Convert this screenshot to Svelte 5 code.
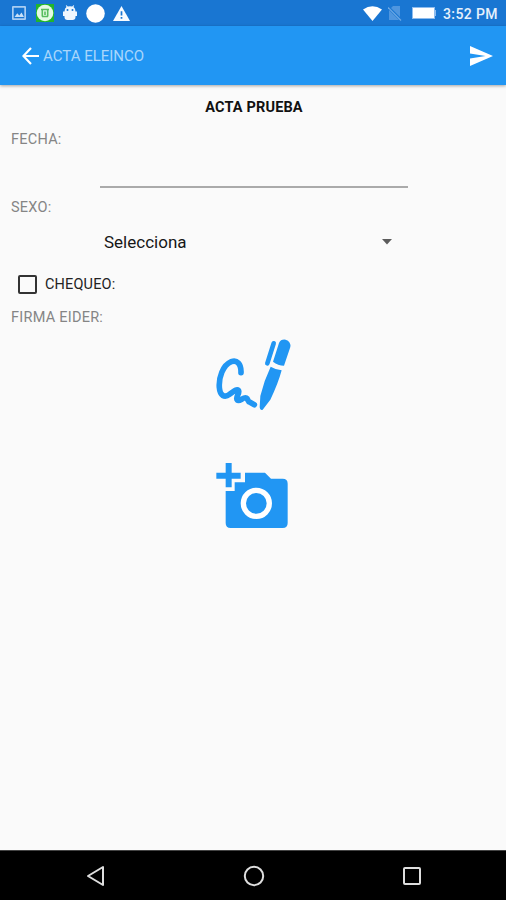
<script>
  let checked = $state(false);
</script>

<div class="screen">
  <div class="status">
    <div class="notifications">
      <svg width="14" height="14" viewBox="0 0 14 14"><path fill="#a9cdf2" fill-rule="evenodd" d="M1 0h12q1 0 1 1v12q0 1-1 1H1q-1 0-1-1V1q0-1 1-1zM1.700 1.700v10.600h10.600V1.700z"/><path fill="#c8e0f7" d="M2.500 11l2.800-3.700 2 2.300 2.200-3 2.500 4.400z"/></svg>
      <svg width="18" height="18" viewBox="0 0 18 18"><path fill="#22b52c" d="M0 0h18v18H0z"/><circle cx="9" cy="9" r="8.300" fill="#e4fae3"/><path d="M5 5.500h8M6.300 5.500v7M11.700 5.500v7M6 12.500h6M9 7.500v3.500" fill="none" stroke="#58bd5e" stroke-width="1.600"/></svg>
      <svg width="14" height="16" viewBox="0 0 14 16"><path fill="#eef6fe" d="M1.500 6.500Q1.500 3 3.500 2L2.800.6l.7-.4L4.800 1.500q2.200-.6 4.400 0L10.500.2l.7.4-.7 1.400Q12.500 3 12.500 6.500H14V11h-1.500v1q0 3-3 3h-5q-3 0-3-3v-1H0V6.500z"/><circle cx="4.500" cy="5" r="1" fill="#1976d2"/><circle cx="9.500" cy="5" r="1" fill="#1976d2"/></svg>
      <svg width="19" height="19" viewBox="0 0 19 19"><circle cx="9.500" cy="9.500" r="9.300" fill="#fff"/></svg>
      <svg width="17" height="15" viewBox="0 0 17 15"><path fill="#f7fbff" d="M8.500 0L17 15H0z"/><path stroke="#1976d2" stroke-width="1.700" d="M8.500 5.200v4.300M8.500 11v1.800"/></svg>
    </div>
    <div class="system">
      <svg width="19" height="15" viewBox="0 0 19 15"><path fill="#fff" d="M0 3.500Q9.500-3.200 19 3.500L9.500 15z"/></svg>
      <svg class="sim" width="14" height="15" viewBox="0 0 14 15"><path fill="#4f96df" d="M5 0h7v11L3 2zM1 4l10 10H1z"/><path stroke="#6da8e4" stroke-width="1.200" d="M0 1.500L13 14.500"/></svg>
      <svg class="battery" width="24" height="12" viewBox="0 0 24 12"><path fill="#8ebcee" d="M0 0h23v3h1v6h-1v3H0z"/><path fill="#fff" d="M1 1h21v10H1z"/></svg>
      <span class="clock">3:52 PM</span>
    </div>
  </div>

  <header>
    <svg width="18" height="18" viewBox="0 0 18 18"><path d="M9 1L1.400 9 9 17M1.400 9H17" fill="none" stroke="#fff" stroke-width="2.200"/></svg>
    <span class="heading">ACTA ELEINCO</span>
    <svg class="send" width="23" height="20" viewBox="0 0 23 20"><path fill="#fff" d="M0 0l23 10L0 20v-7.600L15.500 10 0 7.600z"/></svg>
  </header>

  <main>
    <div class="title"><span>ACTA PRUEBA</span></div>
    <div class="label"><span>FECHA:</span></div>
    <div class="field"></div>
    <div class="label sexo"><span>SEXO:</span></div>
    <div class="select">
      <span>Selecciona</span>
      <svg width="10" height="6" viewBox="0 0 10 6"><path fill="#5c5c5c" d="M0 0h10L5 5.500z"/></svg>
    </div>
    <div class="check" role="checkbox" aria-checked={checked} tabindex="0" onclick={() => (checked = !checked)} onkeydown={(e) => e.key === ' ' && (checked = !checked)}>
      <span class="box" class:checked></span>
      <span>CHEQUEO:</span>
    </div>
    <div class="label firma"><span>FIRMA EIDER:</span></div>
    <svg class="sign" width="106" height="91" viewBox="0 27 318 273">
      <path d="M123 143C124 115 110 104 94 110C68 121 56 158 58 187C60 213 74 219 89 208C101 199 110 191 115 196C122 203 104 218 112 225C119 231 130 215 139 219C145 222 142 230 150 232L163 239" fill="none" stroke="#2196f3" stroke-width="17" stroke-linecap="round" stroke-linejoin="round"/>
      <path d="M221 55L202 115" stroke="#2196f3" stroke-width="14" stroke-linecap="round"/>
      <path fill="#2196f3" d="M237 54Q242 42 257 44Q273 49 271 66L252 122Q234 122 219 110zM212 125Q227 134 245 136Q234 177 211 224L188 254Q180 257 179 247L181 213Q191 169 212 125z"/>
    </svg>
    <svg class="camera" width="106" height="90" viewBox="0 0 318 270">
      <path fill="#2196f3" d="M135 68h60l18 18h35q15 0 15 15v118q0 15-15 15H92q-15 0-15-15v-96h27V97h31z"/>
      <circle cx="169" cy="160" r="39" fill="none" stroke="#fff" stroke-width="16"/>
      <path stroke="#2196f3" stroke-width="18" d="M49 77h73M86 39v73"/>
    </svg>
  </main>

  <nav>
    <svg width="19" height="22" viewBox="0 0 19 22"><path d="M17 2v18L2 11z" fill="none" stroke="#dedede" stroke-width="2" stroke-linejoin="round"/></svg>
    <svg width="22" height="22" viewBox="0 0 22 22"><circle cx="11" cy="11" r="9.200" fill="none" stroke="#dedede" stroke-width="2"/></svg>
    <svg width="20" height="20" viewBox="0 0 20 20"><rect x="2" y="2" width="16" height="16" rx="1" fill="none" stroke="#dedede" stroke-width="2"/></svg>
  </nav>
</div>

<style>
  :global(body) { margin: 0; }
  .screen { width: 506px; height: 900px; display: flex; flex-direction: column; background: #fafafa; font-family: Roboto, "Liberation Sans", sans-serif; overflow: hidden; }
  svg { display: block; flex: none; }
  span { white-space: nowrap; }
  .status { height: 26px; background: #1976d2; display: flex; justify-content: space-between; align-items: center; padding: 0 8px 0 12px; box-sizing: border-box; flex: none; }
  .notifications, .system { display: flex; align-items: center; }
  .notifications { gap: 9px; }
  .notifications svg:nth-child(2) { margin-left: 1px; }
  .notifications svg:last-child { margin-left: -1px; }
  .sim { margin-left: 6px; }
  .battery { margin: 0 7px 0 10px; }
  .clock { color: #e6f1fc; font-size: 14px; font-weight: 500; line-height: 26px; padding-top: 1px; letter-spacing: .4px; }
  header { height: 59px; background: #2196f3; box-sizing: border-box; padding: 0 13px 0 22px; display: flex; align-items: center; flex: none; box-shadow: 0 1px 3px rgba(0,0,0,.35); }
  .heading { color: #a9d6fb; font-size: 15px; margin-left: 3px; padding-top: 1px; }
  .send { margin-left: auto; }
  main { flex: 1; display: flex; flex-direction: column; }
  .title { height: 44px; display: flex; align-items: center; justify-content: center; padding-left: 2px; font-size: 14.500px; letter-spacing: .15px; font-weight: 700; color: #111; }
  .label { height: 20px; display: flex; align-items: center; padding-left: 11px; color: #858585; font-size: 14.500px; letter-spacing: .25px; }
  .field { width: 308px; height: 39px; margin: 0 98px 0 100px; box-sizing: border-box; border-bottom: 2px solid #aaa; }
  .sexo { margin-top: 9px; }
  .select { height: 50px; display: flex; align-items: center; justify-content: space-between; padding: 0 114px 0 104px; color: #161616; font-size: 17px; }
  .check { height: 34px; display: flex; align-items: center; padding-left: 18px; gap: 8px; font-size: 14.500px; letter-spacing: .15px; color: #222; outline: none; }
  .box { width: 19px; height: 19px; box-sizing: border-box; border: 2px solid #333; border-radius: 2px; }
  .box.checked { background: #2196f3; }
  .firma { height: 33px; }
  .sign, .camera { align-self: center; }
  .camera { margin-top: 25px; }
  nav { height: 50px; flex: none; background: #000; box-sizing: border-box; border-top: 1px solid #444; display: flex; justify-content: space-between; align-items: center; padding: 0 84px 0 86px; }
</style>
